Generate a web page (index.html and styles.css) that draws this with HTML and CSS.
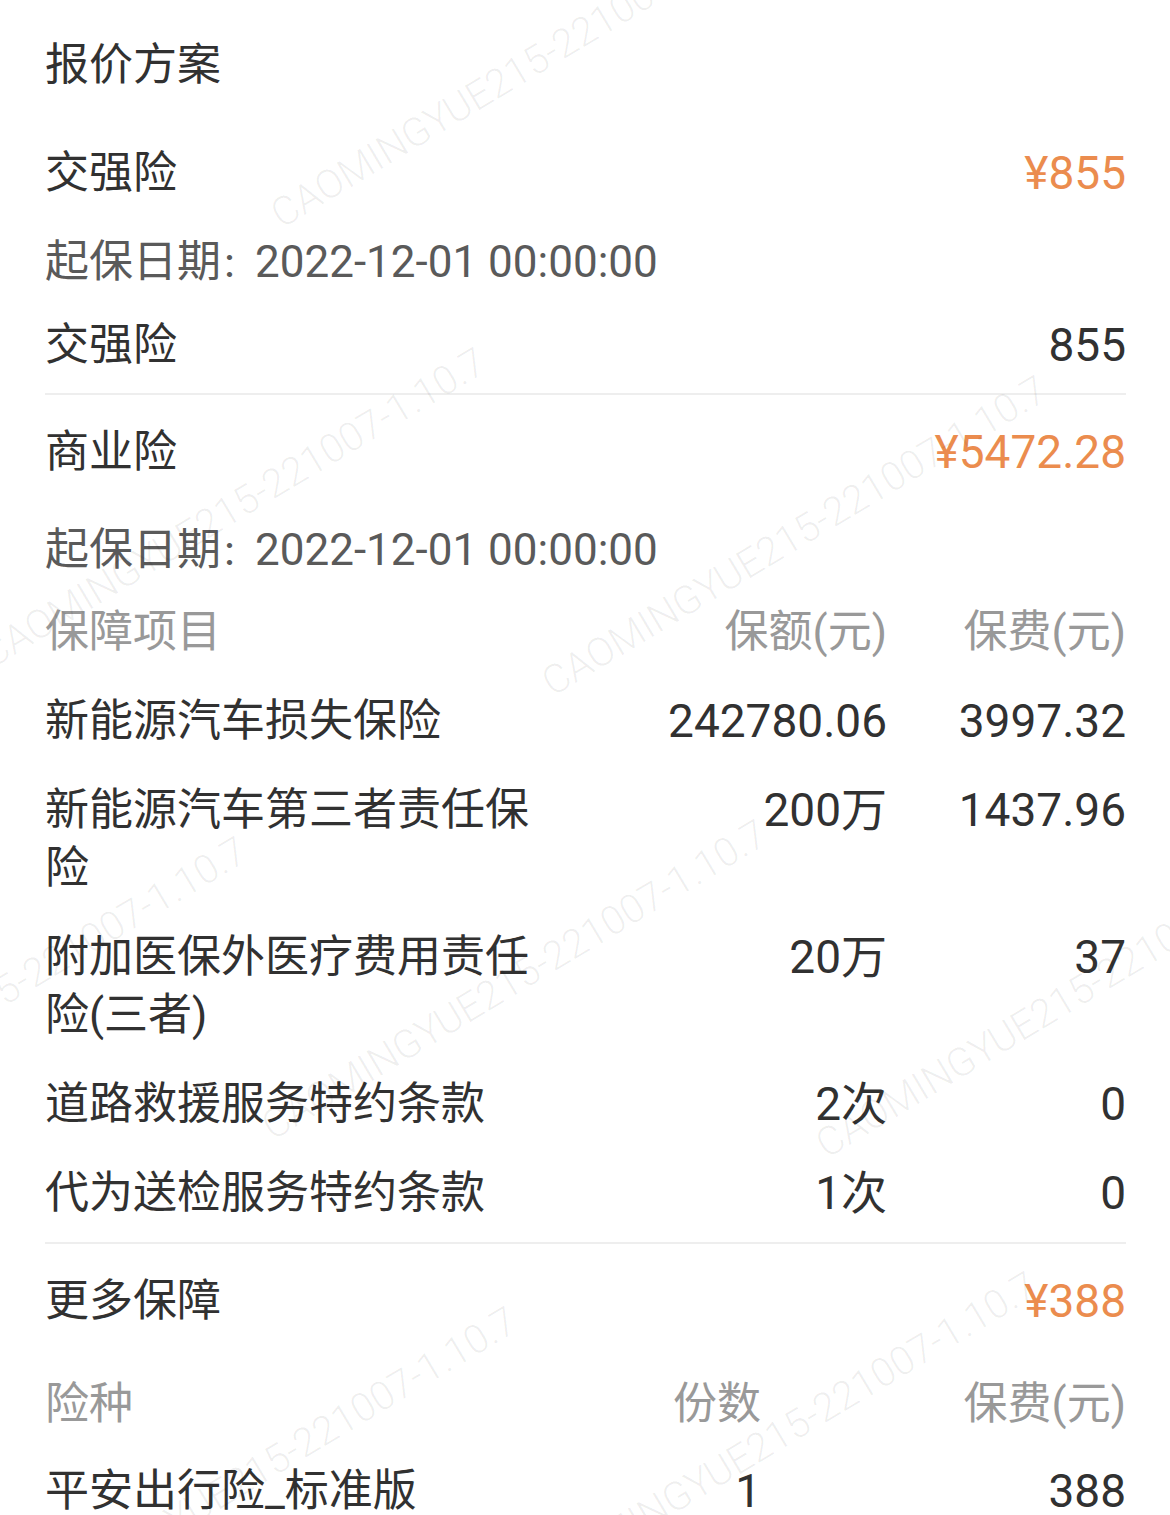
FILE: index.html
```html
<!DOCTYPE html>
<html lang="zh-CN">
<head>
<meta charset="utf-8">
<title>报价方案</title>
<link rel="stylesheet" href="styles.css">
</head>
<body>
<div class="page">
  <div class="title">报价方案</div>

  <section class="block">
    <div class="sum-row"><span>交强险</span><span class="price">¥855</span></div>
    <div class="date">起保日期<span class="colon">：</span><span class="date-num">2022-12-01 00:00:00</span></div>
    <div class="line-row"><span>交强险</span><span class="num">855</span></div>
  </section>

  <div class="divider divider-1"></div>

  <section class="block">
    <div class="sum-row sum-row-2"><span>商业险</span><span class="price">¥5472.28</span></div>
    <div class="date date-2">起保日期<span class="colon">：</span><span class="date-num">2022-12-01 00:00:00</span></div>
    <div class="table cover-table">
      <div class="th">保障项目</div><div class="th right">保额(元)</div><div class="th right">保费(元)</div>
      <div class="td">新能源汽车损失保险</div><div class="td right num">242780.06</div><div class="td right num">3997.32</div>
      <div class="td">新能源汽车第三者责任保险</div><div class="td right num">200万</div><div class="td right num">1437.96</div>
      <div class="td">附加医保外医疗费用责任险(三者)</div><div class="td right num">20万</div><div class="td right num">37</div>
      <div class="td">道路救援服务特约条款</div><div class="td right num">2次</div><div class="td right num">0</div>
      <div class="td">代为送检服务特约条款</div><div class="td right num">1次</div><div class="td right num">0</div>
    </div>
  </section>

  <div class="divider divider-2"></div>

  <section class="block">
    <div class="sum-row sum-row-3"><span>更多保障</span><span class="price">¥388</span></div>
    <div class="table more-table">
      <div class="th">险种</div><div class="th right">份数</div><div class="th right">保费(元)</div>
      <div class="td">平安出行险_标准版</div><div class="td right num">1</div><div class="td right num">388</div>
    </div>
  </section>

  <div class="wm-layer" aria-hidden="true">
    <span class="wm wm-a">CAOMINGYUE215-221007-1.10.7</span>
    <span class="wm wm-b">CAOMINGYUE215-221007-1.10.7</span>
    <span class="wm wm-c">CAOMINGYUE215-221007-1.10.7</span>
    <span class="wm wm-d">CAOMINGYUE215-221007-1.10.7</span>
    <span class="wm wm-e">CAOMINGYUE215-221007-1.10.7</span>
    <span class="wm wm-f">CAOMINGYUE215-221007-1.10.7</span>
    <span class="wm wm-g">CAOMINGYUE215-221007-1.10.7</span>
    <span class="wm wm-h">CAOMINGYUE215-221007-1.10.7</span>
  </div>
</div>
</body>
</html>
```

FILE: styles.css
```css
* { box-sizing: border-box; }

html, body {
  margin: 0;
  padding: 0;
  background: #ffffff;
}

body {
  font-family: "Roboto", "Noto Sans CJK SC", sans-serif;
  font-size: 44px;
  color: #313131;
}

.page {
  position: relative;
  width: 1170px;
  height: 1515px;
  padding: 0 44px 0 45px;
  overflow: hidden;
}

.title {
  height: 130px;
  line-height: 130px;
}

.sum-row {
  display: flex;
  justify-content: space-between;
  align-items: center;
  height: 86px;
  line-height: 86px;
}

.sum-row-2 { margin-top: 14px; }
.sum-row-3 { margin-top: 14px; }

.price {
  color: #eb8c4e;
  font-size: 46px;
}

.num { font-size: 46px; }

.date {
  height: 92px;
  line-height: 92px;
  color: #5a5a5a;
  white-space: nowrap;
}

.date-2 { margin-top: 9px; }

.colon {
  font-size: 34px;
}

.date-num {
  font-size: 44px;
}

.line-row {
  display: flex;
  justify-content: space-between;
  height: 74px;
  line-height: 74px;
}

.divider {
  height: 2px;
  background: #eeeeee;
}

.divider-1 { margin-top: 11px; }
.divider-2 { margin-top: 20px; }

.table {
  display: grid;
  line-height: 58px;
}

.cover-table {
  grid-template-columns: 490px 1fr 239px;
  row-gap: 31px;
  margin-top: 7px;
}

.more-table {
  grid-template-columns: 1fr 200px 365px;
  row-gap: 36px;
  margin-top: 31px;
}

.more-table .td {
  line-height: 44px;
}

.th {
  color: #999999;
}

.right {
  text-align: right;
  white-space: nowrap;
}

.wm-layer {
  position: absolute;
  inset: 0;
  overflow: hidden;
  pointer-events: none;
}

.wm {
  position: absolute;
  font-family: "Roboto", sans-serif;
  font-weight: 300;
  font-size: 40px;
  line-height: 40px;
  color: rgba(0, 0, 0, 0.065);
  white-space: nowrap;
  transform-origin: 0 100%;
  transform: rotate(-31deg);
}

.wm-a { left: 285px; top: 195px; }
.wm-b { left: -5px; top: 635px; }
.wm-c { left: 556px; top: 663px; }
.wm-d { left: -244px; top: 1124px; }
.wm-e { left: 276px; top: 1107px; }
.wm-f { left: 830px; top: 1125px; }
.wm-g { left: 26px; top: 1594px; }
.wm-h { left: 546px; top: 1559px; }
```
